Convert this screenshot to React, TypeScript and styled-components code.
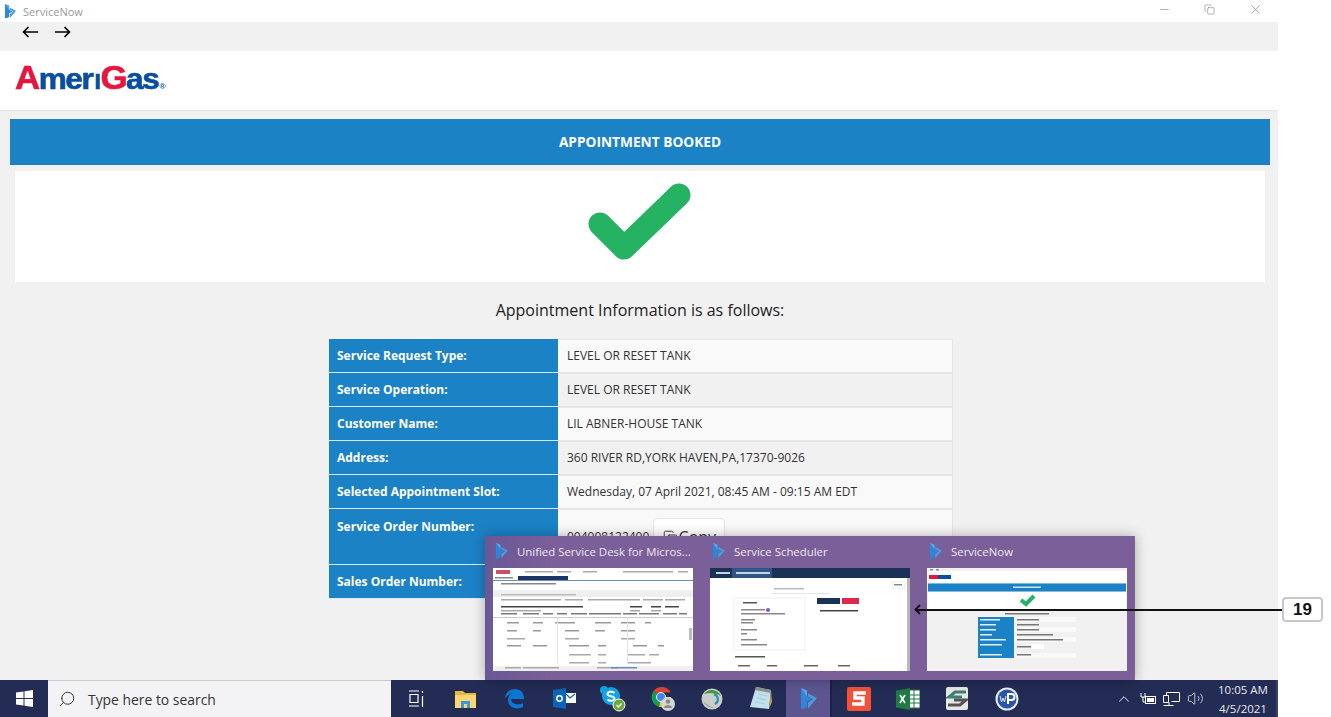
import React from 'react'
import styled, { createGlobalStyle } from 'styled-components'
import { ChevronUp, Copy, Minus, Search, Volume2, X } from 'lucide-react'

const GlobalStyle = createGlobalStyle`
  html, body { margin: 0; padding: 0; background: #fff; }
  body { font-family: "Open Sans", "Liberation Sans", sans-serif; color: #333; }
  * { box-sizing: border-box; }
`

const Screen = styled.div`
  position: relative;
  width: 1331px;
  height: 717px;
  overflow: hidden;
  background: #fff;
`

const Window = styled.div`
  width: 1278px;
  height: 717px;
  display: flex;
  flex-direction: column;
`

const TitleBar = styled.div`
  height: 22px;
  display: flex;
  align-items: center;
  padding-left: 5px;
  background: #fff;
  color: #9a9a9a;
  font-size: 11px;
  gap: 7px;
`

const WindowButtons = styled.div`
  margin-left: auto;
  display: flex;
  align-items: center;
  gap: 33px;
  padding: 0 15px 4px 0;
  color: #777;
`

const NavBar = styled.div`
  height: 29px;
  background: #f1f1f1;
  display: flex;
  align-items: flex-start;
  gap: 17px;
  padding: 4px 0 0 22px;
  color: #000;
`

const LogoBar = styled.div`
  height: 60px;
  background: #fff;
  border-bottom: 1px solid #e4e4e4;
  display: flex;
  align-items: center;
  padding: 0 0 7px 15px;
`

const Logo = styled.div`
  font-family: "Liberation Sans", Arial, sans-serif;
  font-weight: 700;
  font-size: 30px;
  letter-spacing: -1.4px;
  line-height: 1;
  color: #0a4ea2;
  transform: scaleX(1.055);
  transform-origin: left center;
  -webkit-text-stroke: 0.6px currentColor;
`

const LogoRed = styled.span`
  color: #e5173f;
`

const LogoBigCap = styled(LogoRed)`
  font-size: 33px;
`

const LogoSmallCap = styled.span`
  font-size: 22px;
  margin: 0 1px 0 2px;
`

const LogoMark = styled.span`
  font-size: 8px;
  letter-spacing: 0;
  margin-left: 1px;
  -webkit-text-stroke: 0;
`

const Content = styled.main`
  flex: 1;
  background: #f1f1f1;
  padding: 8px 8px 0 10px;
  display: flex;
  flex-direction: column;
  align-items: stretch;
`

const Banner = styled.div`
  height: 46px;
  padding-bottom: 2px;
  background: #1c82c6;
  color: #fff;
  font-weight: 700;
  font-size: 13.7px;
  display: flex;
  align-items: center;
  justify-content: center;
`

const CheckPanel = styled.div`
  height: 111px;
  margin: 6px 5px 0;
  padding-bottom: 7px;
  background: #fff;
  display: flex;
  align-items: center;
  justify-content: center;
`

const Heading = styled.h2`
  margin: 17px 0 0;
  height: 22px;
  font-weight: 400;
  font-size: 16px;
  line-height: 22px;
  text-align: center;
  color: #222;
`

const InfoTable = styled.div`
  width: 624px;
  margin: 18px 0 0 319px;
  display: flex;
  flex-direction: column;
`

const Row = styled.div<{ $tall?: boolean; $shaded?: boolean }>`
  height: ${p => (p.$tall ? 56 : 34)}px;
  display: grid;
  grid-template-columns: 229px 1fr;
  background: ${p => (p.$shaded ? '#f1f1f1' : '#f9f9f9')};
`

const Label = styled.div<{ $top?: boolean }>`
  background: #1c82c6;
  color: #fff;
  font-weight: 700;
  font-size: 12px;
  padding: ${p => (p.$top ? '9px' : '0')} 8px 0;
  display: flex;
  align-items: ${p => (p.$top ? 'flex-start' : 'center')};
  border-bottom: 1px solid #d7e9f5;
`

const Value = styled.div`
  font-size: 12px;
  color: #333;
  padding: 0 8px 2px 9px;
  display: flex;
  align-items: center;
  gap: 4px;
  border-top: 1px solid #e6e6e6;
  border-right: 1px solid #e6e6e6;
  border-bottom: 1px solid #e6e6e6;
`

const CopyButton = styled.div`
  width: 72px;
  height: 38px;
  margin-top: 2px;
  background: #fff;
  border: 1px solid #e4e4e4;
  border-radius: 4px;
  display: flex;
  align-items: center;
  justify-content: center;
  gap: 1px;
  font-size: 16px;
  color: #333;
`

const Taskbar = styled.footer`
  height: 37px;
  background: #232c54;
  display: flex;
  align-items: stretch;
  color: #fff;
  border-right: 2px solid #3a4266;
`

const StartButton = styled.div`
  width: 48px;
  display: flex;
  align-items: center;
  justify-content: center;
`

const SearchBox = styled.div`
  width: 343px;
  background: #f3f3f5;
  border-top: 1px solid #c9c9c9;
  display: flex;
  align-items: center;
  gap: 12px;
  padding-left: 10px;
  color: #333;
  font-size: 13.9px;
`

const MirroredSearch = styled(Search)`
  transform: scaleX(-1);
`

const TaskIcons = styled.div`
  display: flex;
  align-items: stretch;
  padding-left: 1px;
`

const TaskIcon = styled.div<{ $active?: boolean }>`
  display: flex;
  align-items: center;
  justify-content: center;
  background: ${p => (p.$active ? '#5d5590' : 'transparent')};
  padding-left: ${p => (p.$active ? '3px' : '0')};
  width: ${p => (p.$active ? '44px' : '49.2px')};
  box-shadow: ${p => (p.$active ? '2px 0 0 #1a2245' : 'none')};
  margin-right: ${p => (p.$active ? '5px' : '0')};
`

const Tray = styled.div`
  margin-left: auto;
  display: flex;
  align-items: center;
  gap: 7px;
  padding-right: 4px;
`

const Clock = styled.div`
  width: 58px;
  margin-left: 3px;
  font-size: 11.5px;
  line-height: 19px;
  text-align: center;
  color: #e8e8ee;
`

const Flyout = styled.div`
  position: absolute;
  left: 485px;
  top: 536px;
  width: 650px;
  height: 144px;
  background: linear-gradient(90deg, #6a5896 0, #7b5f99 70px, #7b5f99 100%);
  box-shadow: 0 0 12px rgba(0, 0, 0, 0.3);
  display: grid;
  grid-template-columns: repeat(3, 217px);
  padding-left: 8px;
`

const Preview = styled.div`
  display: flex;
  flex-direction: column;
`

const PreviewTitle = styled.div`
  height: 32px;
  padding: 0 0 2px 3px;
  display: flex;
  align-items: center;
  gap: 9px;
  font-size: 11.4px;
  color: #ece8f2;
  white-space: nowrap;
`

const Thumb = styled.div`
  width: 200px;
  height: 103px;
  background: #fff;
  overflow: hidden;

  svg {
    display: block;
    filter: blur(0.6px);
  }
`

const Callout = styled.div`
  position: absolute;
  left: 914px;
  top: 597px;
  width: 409px;
  height: 25px;
  display: flex;
  align-items: center;
`

const CalloutLine = styled.div`
  flex: 1;
  height: 2px;
  margin-left: -8px;
  background: #111;
`

const CalloutBadge = styled.div`
  width: 41px;
  height: 25px;
  background: #fff;
  border: 2px solid #c8c8c8;
  border-radius: 4px;
  font-family: "Liberation Sans", Arial, sans-serif;
  font-weight: 700;
  font-size: 17px;
  color: #111;
  display: flex;
  align-items: center;
  justify-content: center;
`

const DynamicsIcon = ({ size = 12 }: { size?: number }) => (
  <svg width={size} height={size * 1.35} viewBox="0 0 16 21.600">
    <path d="M0 0l6 2.500v6L11 11 6 13.500V19l-6 2.600z" fill="#2f86d6" />
    <path d="M7 5.500l9 4.500L7 20.500v-6l5-3.500-5-2.500z" fill="#4a9be0" />
    <path d="M0 0l6 2.500v6z" fill="#5aa8e8" />
  </svg>
)

const CallArrow = () => (
  <svg width="9" height="11" viewBox="0 0 9 11" fill="none" stroke="#111" strokeWidth="1.800">
    <path d="M6 1L1.500 5.500 6 10" />
  </svg>
)

const NavArrow = ({ flip }: { flip?: boolean }) => (
  <svg
    width="16"
    height="12"
    viewBox="0 0 16 12"
    fill="none"
    stroke="#000"
    strokeWidth="1.600"
    transform={flip ? 'scale(-1 1)' : undefined}
  >
    <path d="M16 6H1.500M6.500 1l-5 5 5 5" />
  </svg>
)

const CheckMark = () => (
  <svg width="104" height="80" viewBox="0 0 104 80">
    <path
      d="M12 41l24 24L91 12"
      fill="none"
      stroke="#25b363"
      strokeWidth="23"
      strokeLinecap="round"
      strokeLinejoin="round"
    />
  </svg>
)

const WindowsLogo = () => (
  <svg width="17" height="17" viewBox="0 0 17 17" fill="#fff">
    <path d="M0 2.500l7.500-1v6.500H0zM8.500 1.300L17 0v8H8.500zM0 9h7.500v6.500l-7.500-1zM8.500 9H17v8l-8.500-1.200z" />
  </svg>
)

const TaskViewIcon = () => (
  <svg width="17" height="17" viewBox="0 0 17 17" fill="none" stroke="#fff" strokeWidth="1.200">
    <path d="M1 1h10M1 16h10M2 4.500h8v8H2zM14.500 1v2M14.500 6v11" />
  </svg>
)

const ExplorerIcon = () => (
  <svg width="22" height="20" viewBox="0 0 22 20">
    <path d="M0 2h8l2 2h11v15H0z" fill="#e8b83e" />
    <path d="M0 6h21v13H0z" fill="#f7d774" />
    <path d="M6 12h9v7H6z" fill="#3d97dc" />
    <path d="M9 15h3v4H9z" fill="#f7d774" />
  </svg>
)

const EdgeIcon = () => (
  <svg width="21" height="21" viewBox="0 0 21 21">
    <path
      d="M1 11C1 4 6 1 11 1c6 0 9 4 9 10H7c0 5 7 7 12 4v4c-6 3-15 1-15-7 0-3 2-6 5-7-4 1-7 3-8 6z"
      fill="#0a78d4"
    />
  </svg>
)

const OutlookIcon = () => (
  <svg width="23" height="21" viewBox="0 0 23 21">
    <path d="M11 5h12v10H11z" fill="#fff" />
    <path d="M13 6l4 4 5-4" fill="none" stroke="#0a64b8" strokeWidth="1.200" />
    <path d="M0 2l13-2v21L0 19z" fill="#0a64b8" />
    <circle cx="6.500" cy="10.500" r="2.700" fill="none" stroke="#fff" strokeWidth="1.500" />
  </svg>
)

const SkypeIcon = () => (
  <svg width="26" height="26" viewBox="0 0 26 26">
    <circle cx="11" cy="10" r="9" fill="#12a5e6" />
    <circle cx="4" cy="4" r="4" fill="#12a5e6" />
    <path
      d="M14.500 7c-2-2-7-1.500-7 1 0 3 7 1.500 7 4.500 0 2.500-5 3-7 1"
      fill="none"
      stroke="#fff"
      strokeWidth="2"
    />
    <circle cx="19" cy="19" r="6" fill="#6fa83a" stroke="#fff" />
    <path d="M16.500 19l2 2 3-3.500" fill="none" stroke="#fff" strokeWidth="1.300" />
  </svg>
)

const ChromeIcon = () => (
  <svg width="26" height="25" viewBox="0 0 26 25">
    <path d="M11 11L3.500 5A10.500 10.500 0 0 1 21 6.500H11z" fill="#db4437" />
    <path d="M11 11L3.500 5A10.500 10.500 0 0 0 9 21z" fill="#0f9d58" />
    <path d="M11 11h10a10.500 10.500 0 0 1-12 10z" fill="#fbbc05" />
    <circle cx="11" cy="11" r="4.500" fill="#4285f4" stroke="#fff" />
    <circle cx="18" cy="18" r="7" fill="#d6d6d6" />
    <circle cx="18" cy="15.500" r="2.200" fill="#8a8a8a" />
    <path d="M14 22c0-4 8-4 8 0z" fill="#8a8a8a" />
  </svg>
)

const GlobeIcon = () => (
  <svg width="22" height="22" viewBox="0 0 22 22">
    <circle cx="11" cy="11" r="10.500" fill="#c9ccc8" />
    <path d="M3 6c5-6 13-5 17 2-5-3-11-4-17-2z" fill="#3f9a3c" />
    <path d="M13 6c5 2 5 8 1 10" fill="none" stroke="#2a8fb0" strokeWidth="2" />
    <path d="M2 13c3 5 8 7 11 7-5-2-8-4-11-7z" fill="#8f8f8f" />
  </svg>
)

const NotepadIcon = () => (
  <svg width="23" height="25" viewBox="0 0 23 25">
    <path d="M7 1l15 3-2 19-19-2z" fill="#c2e0ec" />
    <path d="M7 1l15 3-.5 3L6 4z" fill="#8a8f92" />
    <path d="M20 23l2-19 1 12z" fill="#c29a4a" />
    <path d="M9 8l9 2M8 12l9 2M6 16l10 2" stroke="#9fc7d8" strokeWidth=".8" />
  </svg>
)

const SublimeS = () => (
  <svg width="24" height="24" viewBox="0 0 24 24">
    <rect width="24" height="24" rx="2" fill="#f4503a" />
    <path d="M19 6H8v5h8v6H5" fill="none" stroke="#fff" strokeWidth="3.400" />
  </svg>
)

const ExcelIcon = () => (
  <svg width="24" height="22" viewBox="0 0 24 22">
    <path d="M12 2h12v18H12z" fill="#fff" stroke="#1f7a45" />
    <path d="M12 7h12M12 11h12M12 15h12M18 2v18" stroke="#1f7a45" />
    <path d="M0 2.500L14 0v22L0 19.500z" fill="#1f7a45" />
    <path d="M4 7l5 8M9 7l-5 8" stroke="#fff" strokeWidth="1.600" />
  </svg>
)

const SwapIcon = () => (
  <svg width="22" height="23" viewBox="0 0 22 23">
    <rect width="22" height="23" rx="2" fill="#e6e8e6" />
    <path d="M20 5H9l-6 5h13" fill="none" stroke="#3f7f72" strokeWidth="3" />
    <path d="M2 18h12l6-5H8" fill="none" stroke="#555" strokeWidth="3" />
  </svg>
)

const WpIcon = () => (
  <svg width="24" height="24" viewBox="0 0 24 24">
    <circle cx="12" cy="12" r="11.500" fill="#e8edf5" />
    <circle cx="12" cy="12" r="9.500" fill="#2c55a8" />
    <path d="M5 9l1.500 6 1.500-4 1.500 4L11 9" fill="none" stroke="#dfe7f5" strokeWidth="1" />
    <path d="M13 17V7h3.500a3 3 0 0 1 0 6H13" fill="none" stroke="#fff" strokeWidth="2" />
  </svg>
)

const PlugBattery = () => (
  <svg width="16" height="14" viewBox="0 0 16 14" fill="none" stroke="#fff">
    <rect x="5.500" y="4.500" width="10" height="7" />
    <rect x="7" y="6" width="7" height="4" fill="#fff" stroke="none" />
    <path d="M1 1v4h4V1M3 5v5h3" />
  </svg>
)

const NetworkIcon = () => (
  <svg width="17" height="14" viewBox="0 0 17 14" fill="none" stroke="#fff">
    <path d="M3.500 3.500v-3h13v9h-8M.5 3.500h5v7h-5zM.5 13.500h10M6 10.500v3" />
  </svg>
)

// thumbnails are small pictures of other windows, only the blurred shapes are visible
const lines = (items: number[][], fill = '#b4b4bc') =>
  items.map(([x, y, w, h = 1.5], i) => <rect key={i} x={x} y={y} width={w} height={h} fill={fill} />)

const UsdThumb = () => (
  <svg width="200" height="103" viewBox="0 0 200 103">
    <rect width="200" height="103" fill="#fff" />
    <rect x="3" y="2" width="14" height="4" fill="#c8506a" />
    {lines([[32, 3, 28], [64, 3, 14], [90, 3, 14], [130, 3, 50], [185, 3, 10]], '#aaa')}
    <rect x="25" y="8" width="50" height="5" fill="#1c3566" />
    <rect y="12" width="200" height="1" fill="#6a8ac0" />
    {lines([[2, 9, 18]], '#888')}
    {lines([[8, 15, 55]], '#888')}
    <rect y="22" width="200" height="3" fill="#f0f0f2" />
    <rect y="25" width="200" height="4" fill="#eee" />
    {lines([[8, 26, 75]], '#bbb')}
    {lines([[8, 31, 60], [72, 31, 18], [95, 31, 30], [125, 31, 22], [150, 31, 20], [172, 31, 20]], '#aaa')}
    {lines([[8, 38, 82], [137, 38, 12], [158, 38, 10], [172, 38, 14]], '#444')}
    {lines([[8, 42, 40], [137, 42, 10], [158, 42, 10]], '#aaa')}
    <rect y="49" width="200" height="1" fill="#ccc" />
    {lines([[8, 45, 16], [30, 45, 16], [50, 45, 10], [64, 45, 10], [78, 45, 16], [96, 45, 32], [130, 45, 14], [146, 45, 20], [170, 45, 14], [186, 45, 8]], '#778')}
    {lines([[14, 54, 12], [40, 54, 10], [62, 54, 20], [102, 54, 16], [128, 54, 14], [152, 54, 6]], '#999')}
    {lines([[14, 62, 10], [40, 62, 8], [72, 62, 14], [102, 62, 10], [128, 62, 14]], '#999')}
    {lines([[14, 70, 18], [72, 70, 14], [128, 70, 14]], '#aaa')}
    {lines([[14, 77, 14], [40, 77, 14], [76, 77, 20], [105, 77, 8], [140, 77, 14], [165, 77, 6]], '#999')}
    {lines([[76, 86, 22], [105, 86, 8], [134, 86, 18], [156, 86, 10]], '#aaa')}
    {lines([[76, 94, 20], [105, 94, 8], [134, 94, 24]], '#aaa')}
    <rect x="64" y="50" width="1" height="46" fill="#e4e4e4" />
    <rect x="134" y="50" width="1" height="46" fill="#e4e4e4" />
    <rect x="196" y="60" width="3" height="12" fill="#bbb" />
    <rect y="98" width="200" height="5" fill="#efefef" />
    {lines([[12, 99, 16], [30, 99, 36], [104, 99, 20]], '#aaa')}
    {lines([[118, 99, 26]], '#6a8ad0')}
  </svg>
)

const SchedulerThumb = () => (
  <svg width="200" height="103" viewBox="0 0 200 103">
    <rect width="200" height="103" fill="#fff" />
    <rect width="200" height="10" fill="#1a3256" />
    <rect x="22" width="40" height="10" fill="#2f5587" />
    {lines([[6, 4, 14, 2], [26, 4, 34, 2]], '#c8d2e0')}
    <rect x="182" y="14" width="13" height="6" fill="#fff" stroke="#eee" />
    {lines([[184, 16, 8]], '#888')}
    {lines([[64, 20, 30]], '#bbb')}
    <rect x="62" y="25" width="58" height="1" fill="#e4e4e4" />
    <rect x="24" y="30" width="71" height="52" fill="#fff" stroke="#f0f0f0" />
    {lines([[33, 34, 14]], '#555')}
    {lines([[31, 41, 24], [31, 45, 44], [31, 51, 14], [31, 54, 12], [31, 61, 16], [31, 65, 6], [31, 71, 16], [31, 76, 26]], '#888')}
    <circle cx="58" cy="42" r="2" fill="#8a50d8" />
    <rect x="107" y="30" width="23" height="6" fill="#1a3256" />
    <rect x="132" y="30" width="17" height="6" fill="#e0284e" />
    {lines([[110, 42, 38]], '#444')}
    {lines([[25, 88, 30]], '#555')}
    {lines([[28, 97, 12], [57, 97, 10], [94, 97, 14], [128, 97, 12]], '#666')}
    <rect x="197" y="10" width="3" height="93" fill="#b8b8b8" />
  </svg>
)

const SelfThumb = () => (
  <svg width="200" height="103" viewBox="0 0 200 103">
    <rect width="200" height="103" fill="#f1f1f1" />
    <rect y="3" width="200" height="12" fill="#fff" />
    {lines([[3, 1, 3], [9, 1, 3]], '#888')}
    <rect x="2" y="7" width="9" height="4" fill="#e5173f" />
    <rect x="11" y="7" width="13" height="4" fill="#0a4ea2" />
    <rect x="1" y="15.500" width="198" height="8" fill="#1c82c6" />
    {lines([[86, 18.500, 28]], '#cfe5f5')}
    <rect x="1" y="24" width="198" height="18" fill="#fff" />
    <path d="M94 32l5 4 8-8" fill="none" stroke="#25b363" strokeWidth="4" />
    {lines([[78, 45, 44]], '#777')}
    <rect x="51" y="49" width="36" height="41" fill="#1c82c6" />
    <rect x="87" y="49" width="62" height="5" fill="#f9f9f9" />
    <rect x="87" y="59" width="62" height="5" fill="#f9f9f9" />
    <rect x="87" y="69" width="62" height="5" fill="#f9f9f9" />
    <rect x="87" y="85" width="62" height="5" fill="#f9f9f9" />
    {lines([[53, 51, 20], [53, 56, 16], [53, 61, 16], [53, 66, 12], [53, 71, 26], [53, 76, 22], [53, 86, 22]], '#e4f0f8')}
    {lines([[90, 51, 22], [90, 56, 22], [90, 61, 22], [90, 66, 36], [90, 71, 46], [90, 78, 14], [90, 86, 14]], '#777')}
    <rect x="104" y="76" width="13" height="5" fill="#fff" />
  </svg>
)

const rows: [string, string][] = [
  ['Service Request Type:', 'LEVEL OR RESET TANK'],
  ['Service Operation:', 'LEVEL OR RESET TANK'],
  ['Customer Name:', 'LIL ABNER-HOUSE TANK'],
  ['Address:', '360 RIVER RD,YORK HAVEN,PA,17370-9026'],
  ['Selected Appointment Slot:', 'Wednesday, 07 April 2021, 08:45 AM - 09:15 AM EDT'],
]

export default function App() {
  return (
    <Screen>
      <GlobalStyle />
      <Window>
        <TitleBar>
          <DynamicsIcon size={11} />
          ServiceNow
          <WindowButtons>
            <Minus size={13} strokeWidth={1.1} />
            <Copy size={11} strokeWidth={1.2} />
            <X size={15} strokeWidth={1} />
          </WindowButtons>
        </TitleBar>
        <NavBar>
          <NavArrow />
          <NavArrow flip />
        </NavBar>
        <LogoBar>
          <Logo>
            <LogoBigCap>A</LogoBigCap>mer<LogoSmallCap>I</LogoSmallCap>
            <LogoBigCap>G</LogoBigCap>as<LogoMark>®</LogoMark>
          </Logo>
        </LogoBar>
        <Content>
          <Banner>APPOINTMENT BOOKED</Banner>
          <CheckPanel>
            <CheckMark />
          </CheckPanel>
          <Heading>Appointment Information is as follows:</Heading>
          <InfoTable>
            {rows.map(([label, value], i) => (
              <Row key={label} $shaded={i % 2 === 1}>
                <Label>{label}</Label>
                <Value>{value}</Value>
              </Row>
            ))}
            <Row $tall>
              <Label $top>Service Order Number:</Label>
              <Value>
                004008122400
                <CopyButton>
                  <Copy size={15} strokeWidth={1.5} />
                  Copy
                </CopyButton>
              </Value>
            </Row>
            <Row $shaded>
              <Label>Sales Order Number:</Label>
              <Value />
            </Row>
          </InfoTable>
        </Content>
        <Taskbar>
          <StartButton>
            <WindowsLogo />
          </StartButton>
          <SearchBox>
            <MirroredSearch size={18} strokeWidth={1.3} />
            Type here to search
          </SearchBox>
          <TaskIcons>
            <TaskIcon><TaskViewIcon /></TaskIcon>
            <TaskIcon><ExplorerIcon /></TaskIcon>
            <TaskIcon><EdgeIcon /></TaskIcon>
            <TaskIcon><OutlookIcon /></TaskIcon>
            <TaskIcon><SkypeIcon /></TaskIcon>
            <TaskIcon><ChromeIcon /></TaskIcon>
            <TaskIcon><GlobeIcon /></TaskIcon>
            <TaskIcon><NotepadIcon /></TaskIcon>
            <TaskIcon $active><DynamicsIcon size={16} /></TaskIcon>
            <TaskIcon><SublimeS /></TaskIcon>
            <TaskIcon><ExcelIcon /></TaskIcon>
            <TaskIcon><SwapIcon /></TaskIcon>
            <TaskIcon><WpIcon /></TaskIcon>
          </TaskIcons>
          <Tray>
            <ChevronUp size={18} strokeWidth={1.2} />
            <PlugBattery />
            <NetworkIcon />
            <Volume2 size={17} strokeWidth={1} />
            <Clock>
              10:05 AM
              <br />
              4/5/2021
            </Clock>
          </Tray>
        </Taskbar>
      </Window>
      <Flyout>
        <Preview>
          <PreviewTitle>
            <DynamicsIcon />
            Unified Service Desk for Micros...
          </PreviewTitle>
          <Thumb><UsdThumb /></Thumb>
        </Preview>
        <Preview>
          <PreviewTitle>
            <DynamicsIcon />
            Service Scheduler
          </PreviewTitle>
          <Thumb><SchedulerThumb /></Thumb>
        </Preview>
        <Preview>
          <PreviewTitle>
            <DynamicsIcon />
            ServiceNow
          </PreviewTitle>
          <Thumb><SelfThumb /></Thumb>
        </Preview>
      </Flyout>
      <Callout>
        <CallArrow />
        <CalloutLine />
        <CalloutBadge>19</CalloutBadge>
      </Callout>
    </Screen>
  )
}
